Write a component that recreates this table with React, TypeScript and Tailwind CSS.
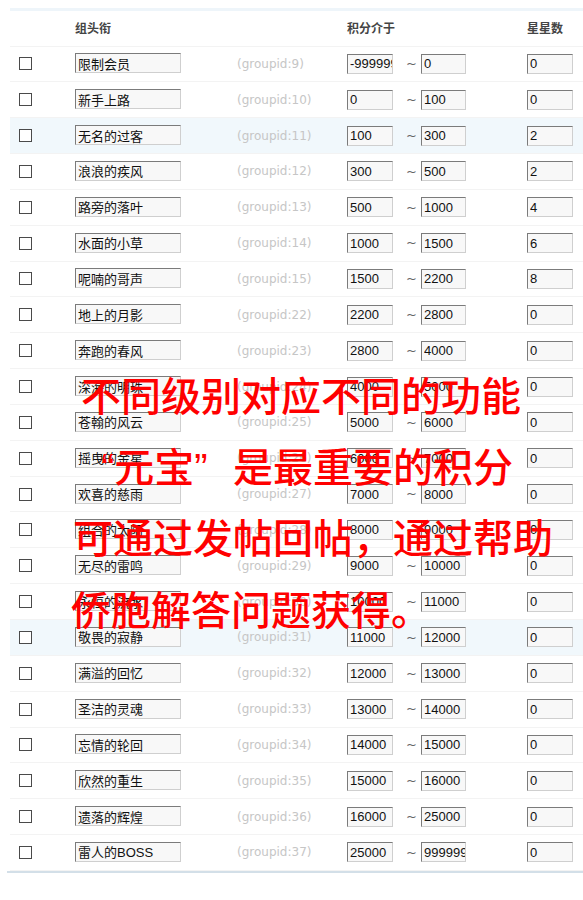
import React from 'react';

type Group = {
  name: string;
  id: number;
  min: string;
  max: string;
  stars: string;
};

const groups: Group[] = [
  { name: '限制会员', id: 9, min: '-999999', max: '0', stars: '0' },
  { name: '新手上路', id: 10, min: '0', max: '100', stars: '0' },
  { name: '无名的过客', id: 11, min: '100', max: '300', stars: '2' },
  { name: '浪浪的疾风', id: 12, min: '300', max: '500', stars: '2' },
  { name: '路旁的落叶', id: 13, min: '500', max: '1000', stars: '4' },
  { name: '水面的小草', id: 14, min: '1000', max: '1500', stars: '6' },
  { name: '呢喃的哥声', id: 15, min: '1500', max: '2200', stars: '8' },
  { name: '地上的月影', id: 22, min: '2200', max: '2800', stars: '0' },
  { name: '奔跑的春风', id: 23, min: '2800', max: '4000', stars: '0' },
  { name: '深海的明珠', id: 24, min: '4000', max: '5000', stars: '0' },
  { name: '苍翰的风云', id: 25, min: '5000', max: '6000', stars: '0' },
  { name: '摇曳的金星', id: 26, min: '6000', max: '7000', stars: '0' },
  { name: '欢喜的慈雨', id: 27, min: '7000', max: '8000', stars: '0' },
  { name: '组合的太阳', id: 28, min: '8000', max: '9000', stars: '0' },
  { name: '无尽的雷鸣', id: 29, min: '9000', max: '10000', stars: '0' },
  { name: '永恒的流水', id: 30, min: '10000', max: '11000', stars: '0' },
  { name: '敬畏的寂静', id: 31, min: '11000', max: '12000', stars: '0' },
  { name: '满溢的回忆', id: 32, min: '12000', max: '13000', stars: '0' },
  { name: '圣洁的灵魂', id: 33, min: '13000', max: '14000', stars: '0' },
  { name: '忘情的轮回', id: 34, min: '14000', max: '15000', stars: '0' },
  { name: '欣然的重生', id: 35, min: '15000', max: '16000', stars: '0' },
  { name: '遗落的辉煌', id: 36, min: '16000', max: '25000', stars: '0' },
  { name: '雷人的BOSS', id: 37, min: '25000', max: '999999', stars: '0' },
];

// rows with the light blue hover tint
const tinted = [11, 31];

const Field = ({ value, width }: { value: string; width: string }) => (
  <input
    readOnly
    value={value}
    className={`${width} h-[20px] pl-[2px] text-[13px] text-[#111] bg-[#f8f8f8] border border-t-[#7b7b7b] border-l-[#7b7b7b] border-r-[#cfcfcf] border-b-[#cfcfcf] outline-none`}
    style={{ fontFamily: '"Liberation Sans", "Noto Sans CJK SC", sans-serif' }}
  />
);

const App = () => {
  return (
    <div className="relative w-[583px] min-h-[900px] bg-white overflow-hidden" style={{ fontFamily: '"DejaVu Sans", "Noto Sans CJK SC", sans-serif' }}>
      <div className="ml-[10px] mt-[8px] h-[3px] bg-[#eef5fa]" />

      <div className="ml-[10px]">
        <div className="flex items-center h-[35.5px] border-b border-[#f3f3f3] text-[12px] font-bold text-[#444]" style={{ fontFamily: '"Noto Sans CJK SC", sans-serif' }}>
          <div className="w-[65px]" />
          <div className="w-[162px]">组头衔</div>
          <div className="w-[110px]" />
          <div className="w-[180px]">积分介于</div>
          <div>星星数</div>
        </div>

        {groups.map((g) => (
          <div
            key={g.id}
            className={`flex items-center h-[35.85px] border-b border-[#f3f3f3] ${tinted.includes(g.id) ? 'bg-[#f1f8fc]' : ''}`}
          >
            <div className="w-[65px] pl-[9px]">
              <span className="block w-[13px] h-[13px] border border-[#4a4a4a] bg-white" />
            </div>
            <div className="w-[162px]">
              <Field value={g.name} width="w-[106px]" />
            </div>
            <div className="w-[110px] text-[12px] text-[#c6c6c6]">(groupid:{g.id})</div>
            <div className="w-[180px] flex items-center">
              <Field value={g.min} width="w-[46px]" />
              <span className="w-[28px] pl-[13px] text-[13px] text-[#666]">~</span>
              <Field value={g.max} width="w-[45px]" />
            </div>
            <Field value={g.stars} width="w-[46px]" />
          </div>
        ))}
      </div>
      <div className="ml-[7px] h-[2px] bg-[#d3dfe8]" />

      {/* red caption laid over the table */}
      <div className="absolute inset-0 pointer-events-none text-[40px] leading-[40px] font-medium text-[#ff0000]" style={{ fontFamily: '"Noto Sans CJK SC", sans-serif' }}>
        <div className="absolute left-[81px] top-[374px] whitespace-nowrap">不同级别对应不同的功能</div>
        <div className="absolute left-[101px] top-[445px] whitespace-nowrap">
          <span style={{ fontFamily: '"Liberation Sans", sans-serif' }}>“</span>元宝<span style={{ fontFamily: '"Liberation Sans", sans-serif' }}>”</span>
        </div>
        <div className="absolute left-[233px] top-[445px] whitespace-nowrap">是最重要的积分</div>
        <div className="absolute left-[73px] top-[516px] whitespace-nowrap">可通过发帖回帖，通过帮助</div>
        <div className="absolute left-[71px] top-[588px] whitespace-nowrap">侨胞解答问题获得。</div>
      </div>
    </div>
  );
};

export default App;
